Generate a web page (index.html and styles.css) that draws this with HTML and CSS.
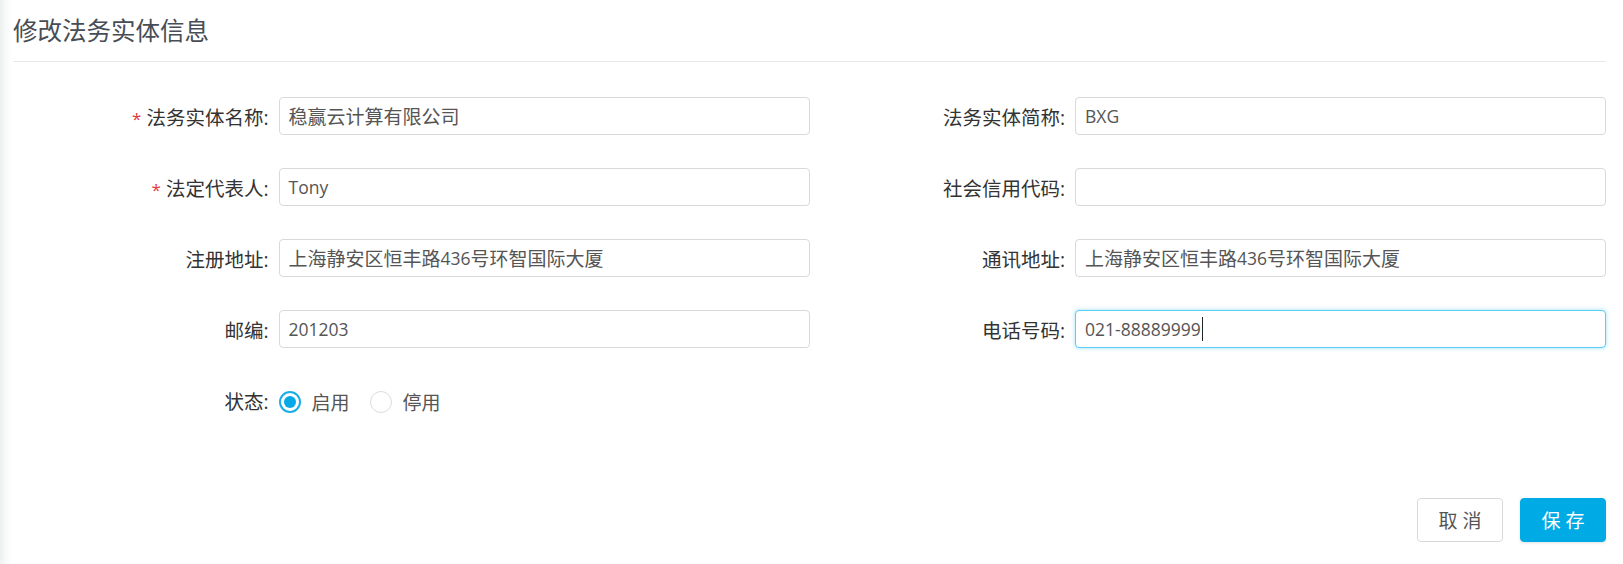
FILE: index.html
```html
<!DOCTYPE html>
<html lang="zh-CN">
<head>
<meta charset="utf-8">
<title>修改法务实体信息</title>
<link rel="stylesheet" href="styles.css">
</head>
<body>
<div class="page">
  <div class="header"><h1 class="title">修改法务实体信息</h1></div>
  <form class="form">
    <div class="grid">
      <div class="field">
        <label class="label"><span class="req">*</span>法务实体名称:</label>
        <div class="control"><div class="input"><span class="cjk">稳赢云计算有限公司</span></div></div>
      </div>
      <div class="field">
        <label class="label">法务实体简称:</label>
        <div class="control"><div class="input">BXG</div></div>
      </div>
      <div class="field">
        <label class="label"><span class="req">*</span>法定代表人:</label>
        <div class="control"><div class="input">Tony</div></div>
      </div>
      <div class="field">
        <label class="label">社会信用代码:</label>
        <div class="control"><div class="input"></div></div>
      </div>
      <div class="field">
        <label class="label">注册地址:</label>
        <div class="control"><div class="input"><span class="cjk">上海静安区恒丰路</span>436<span class="cjk">号环智国际大厦</span></div></div>
      </div>
      <div class="field">
        <label class="label">通讯地址:</label>
        <div class="control"><div class="input"><span class="cjk">上海静安区恒丰路</span>436<span class="cjk">号环智国际大厦</span></div></div>
      </div>
      <div class="field">
        <label class="label">邮编:</label>
        <div class="control"><div class="input">201203</div></div>
      </div>
      <div class="field">
        <label class="label">电话号码:</label>
        <div class="control"><div class="input focused">021-88889999<span class="caret"></span></div></div>
      </div>
      <div class="field">
        <label class="label">状态:</label>
        <div class="control radios">
          <span class="radio checked"><span class="dot"></span></span><span class="radio-text">启用</span>
          <span class="radio"></span><span class="radio-text">停用</span>
        </div>
      </div>
    </div>
    <div class="actions">
      <button type="button" class="btn btn-cancel">取消</button>
      <button type="button" class="btn btn-save">保存</button>
    </div>
  </form>
</div>
</body>
</html>
```
FILE: styles.css
```css
html, body {
  margin: 0;
  padding: 0;
}
body {
  width: 1623px;
  height: 564px;
  overflow: hidden;
  background: linear-gradient(to right, #eef1f1 0, #f7f8f8 5px, #ffffff 12px);
  font-family: "Open Sans", "Noto Sans CJK SC", sans-serif;
  color: #333;
}
.page {
  padding: 0 17px 0 13px;
}
.header {
  height: 61px;
  display: flex;
  align-items: center;
  border-bottom: 1px solid #e8e8e8;
}
.title {
  margin: 0;
  font-size: 24.5px;
  font-weight: normal;
  color: #474d54;
  line-height: 1;
  padding-top: 2px;
}
.form {
  margin: 35px 0 0;
}
.grid {
  display: grid;
  grid-template-columns: 1fr 1fr;
  row-gap: 33px;
}
.field {
  display: grid;
  grid-template-columns: 1fr 2fr;
  align-items: center;
  height: 38px;
}
.label {
  display: flex;
  justify-content: flex-end;
  align-items: center;
  padding-right: 10px;
  font-size: 19.5px;
  color: #333;
  white-space: nowrap;
}
.req {
  color: #e5393c;
  font-size: 17px;
  margin-right: 5px;
  position: relative;
  top: 2px;
}
.input {
  box-sizing: border-box;
  height: 38px;
  border: 1px solid #d9d9d9;
  border-radius: 4px;
  padding: 0 9px;
  font-size: 17.5px;
  color: #555;
  display: flex;
  align-items: center;
  background: #fff;
  white-space: nowrap;
}
.cjk {
  font-size: 19px;
}
.input.focused {
  border-color: #5ccdf3;
  box-shadow: 0 0 4px rgba(92, 205, 243, 0.6);
}
.caret {
  display: inline-block;
  width: 1px;
  height: 24px;
  background: #222;
  margin-left: 1px;
}
.radios {
  display: flex;
  align-items: center;
  height: 38px;
  position: relative;
  top: 2px;
}
.radio {
  box-sizing: border-box;
  width: 22px;
  height: 22px;
  border-radius: 50%;
  border: 1px solid #dcdcdc;
  display: inline-flex;
  align-items: center;
  justify-content: center;
  background: #fff;
}
.radio.checked {
  border: 2px solid #1aaee8;
}
.dot {
  width: 12px;
  height: 12px;
  border-radius: 50%;
  background: #06a9e6;
}
.radio-text {
  font-size: 19px;
  color: #555;
  margin-left: 11px;
  margin-right: 20px;
}
.actions {
  display: flex;
  justify-content: flex-end;
  gap: 17px;
  margin-top: 79px;
}
.btn {
  box-sizing: border-box;
  width: 86px;
  height: 44px;
  border-radius: 4px;
  font-family: "Open Sans", "Noto Sans CJK SC", sans-serif;
  font-size: 19px;
  letter-spacing: 5px;
  padding: 0 0 0 5px;
  cursor: pointer;
}
.btn-cancel {
  background: #fff;
  border: 1px solid #d8d8d8;
  color: #555;
}
.btn-save {
  background: #00abe5;
  border: 1px solid #00abe5;
  color: #fff;
  box-shadow: 0 1px 3px rgba(0, 0, 0, 0.12);
}
```
